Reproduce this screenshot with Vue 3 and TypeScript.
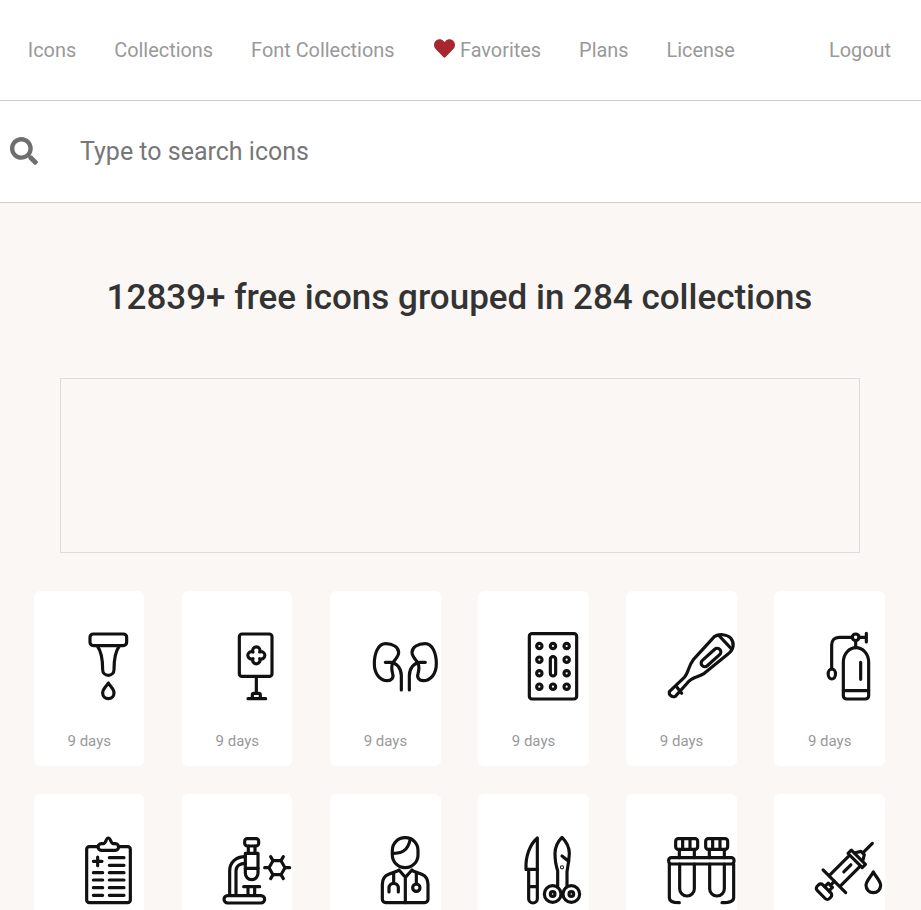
<script setup lang="ts">
interface Link {
  label: string
  heart?: boolean
}

const links: Link[] = [
  { label: 'Icons' },
  { label: 'Collections' },
  { label: 'Font Collections' },
  { label: 'Favorites', heart: true },
  { label: 'Plans' },
  { label: 'License' },
]

// all icons are drawn on a 204 unit square
const icons: string[] = [
  // dropper
  `<rect x="42" y="3" width="110" height="35" rx="10"/>
   <path d="M64 39C76 55 80 85 80 110A17 17 0 0 0 114 110C114 85 118 55 130 39"/>
   <path d="M97 150C90 162 80 168 80 180A17 17 0 0 0 114 180C114 168 104 162 97 150Z"/>`,
  // iv bag
  `<rect x="46" y="3" width="98" height="127" rx="8"/>
   <path d="M87 57A11 11 0 1 1 107 57A11 11 0 1 1 107 77A11 11 0 1 1 87 77A11 11 0 1 1 87 57Z"/>
   <path d="M97 131V181M72 197H125M85 197V186a5 5 0 0 1 5-5H104a5 5 0 0 1 5 5V197"/>`,
  // kidneys
  `<path d="M41 32C18 32 7 62 7 92C7 122 24 143 46 143C58 143 66 134 62 122C58 108 58 100 62 90C68 80 80 72 80 58C80 42 62 32 41 32Z"/>
   <path d="M40 88H56C76 90 88 108 88 128V171"/>
   <path d="M159 32C182 32 193 62 193 92C193 122 176 143 154 143C142 143 134 134 138 122C142 108 142 100 138 90C132 80 120 72 120 58C120 42 138 32 159 32Z"/>
   <path d="M160 88H144C124 90 112 108 112 128V171"/>`,
  // pills
  `<rect x="28" y="2" width="142" height="196" rx="8"/>
   <circle cx="58" cy="39" r="8"/><circle cx="99" cy="39" r="8"/><circle cx="140" cy="39" r="8"/>
   <circle cx="58" cy="80" r="8"/><circle cx="140" cy="80" r="8"/>
   <circle cx="58" cy="121" r="8"/><circle cx="140" cy="121" r="8"/>
   <circle cx="58" cy="161" r="8"/><circle cx="99" cy="161" r="8"/><circle cx="140" cy="161" r="8"/>
   <rect x="91" y="71" width="16" height="58" rx="8"/>`,
  // thermometer
  `<path d="M4 176L49 133C62 120 60 100 76 80L139 11C152 2 176 3 188 15C200 30 198 50 180 63L109 121C90 134 72 130 58 150L22 190A13 13 0 0 1 4 176Z"/>
   <path d="M154 9L189 46M24 159L41 181"/>
   <rect x="93" y="62.500" width="72" height="22" rx="11" transform="rotate(-42 129 73.500)"/>`,
  // oxygen tank
  `<path d="M82 88C82 62 100 44 120 44C140 44 158 62 158 88V188a10 10 0 0 1-10 10H92a10 10 0 0 1-10-10Z"/>
   <path d="M82 173H158M134 88V139M119 23V44M129 13H151M151 1V27M109 13H69C56 13 47 22 47 36V108"/>
   <circle cx="119" cy="13" r="10"/>
   <ellipse cx="47.500" cy="123" rx="11" ry="15"/>`,
  // clipboard
  `<rect x="32" y="32" width="131" height="168" rx="8"/>
   <path fill="#fff" d="M76 43H118C131 43 131 23 118 23H110C105 23 104 6 97 6C90 6 89 23 84 23H76C63 23 63 43 76 43Z"/>
   <path d="M52 76H78M65 63V89M100 65H144M100 88H144M100 110H144M100 132H144M100 155H144M100 178H144M52 110H80M52 132H80M52 155H80M52 178H80"/>`,
  // microscope
  `<rect x="62" y="8" width="42" height="22" rx="8"/>
   <path d="M73 30V52M93 30V52M64 97H102M64 62C35 62 17 80 17 105V176M64 82C48 82 36 90 36 105V176M59 152H107M72 152V178M92 152V178"/>
   <path d="M64 52H102V112a19 19 0 0 1-38 0Z"/>
   <rect x="0" y="179" width="122" height="22" rx="11"/>
   <path d="M135 95L147 74H171L183 95L171 116H147Z"/>
   <path d="M122 95H135M183 95H197M147 74L140 62M171 74L178 62M147 116L140 128M171 116L178 128"/>`,
  // doctor
  `<rect x="61" y="5" width="77" height="90" rx="38"/>
   <path d="M61 52C85 52 108 48 115 8"/>
   <path d="M78 104L50 115C38 120 31 130 31 145V190a10 10 0 0 0 10 10H158a10 10 0 0 0 10-10V145C168 130 161 120 149 115L121 104"/>
   <path d="M81 102L100 124L120 102M100 124V200M65 112V142M51 168V156a14 14 0 0 1 28 0V168M133 112V144"/>
   <circle cx="133" cy="155" r="11"/>`,
  // scalpel and scissors
  `<path d="M52 6V100H18C16 60 30 25 52 6Z"/>
   <path d="M26 100V188a13 13 0 0 0 26 0V100M26 152H52"/>
   <path d="M113 150V104C108 90 105 72 105 52C105 35 112 18 126 4C140 18 148 35 148 52L146 76L126 60"/>
   <path d="M146 76L141 107V150"/>
   <circle cx="98" cy="174" r="25"/><circle cx="98" cy="174" r="7"/>
   <circle cx="154" cy="174" r="25"/><circle cx="154" cy="174" r="7"/>
   <circle cx="126" cy="94" r="1.500"/>`,
  // test tubes
  `<rect x="23" y="8" width="66" height="32" rx="8"/>
   <rect x="113" y="8" width="66" height="32" rx="8"/>
   <path d="M44 8V40M66 8V40M134 8V40M156 8V40M34 40V65M79 40V65M124 40V65M169 40V65"/>
   <rect x="2" y="65" width="196" height="19" rx="8"/>
   <path d="M35 84V158a22 22 0 0 0 44 0V84M125 84V158a22 22 0 0 0 44 0V84"/>
   <path d="M4 84V185C4 194 12 200 34 200M197 84V185C197 194 189 200 162 200"/>`,
  // syringe
  `<g transform="translate(24 167) rotate(-45)">
     <rect x="-12" y="-26" width="24" height="52" rx="9"/>
     <path d="M12 -9H27V9H12M27 0H44"/>
     <path d="M44 -48V48M44 -23H132V23H44M132 -30L146 -30V30L132 30M146 -18L164 -7V7L146 18M164 0H205M84 0H114"/>
   </g>
   <path d="M172 108C165 122 150 135 150 148A22 22 0 0 0 194 148C194 135 179 122 172 108Z"/>`,
]
</script>

<template>
  <div class="page">
    <nav class="nav">
      <a v-for="link in links" :key="link.label" class="nav__link">
        <svg v-if="link.heart" class="nav__heart" viewBox="0 0 512 512">
          <path
            fill="#a8272f"
            d="M462.300 62.600C407.500 15.900 326 24.300 275.700 76.200L256 96.500l-19.700-20.300C186.100 24.300 104.500 15.900 49.700 62.600c-62.800 53.600-66.100 149.800-9.900 207.900l193.500 199.800c12.500 12.900 32.800 12.900 45.300 0l193.500-199.800c56.300-58.100 53-154.300-9.800-207.900z"
          />
        </svg>
        {{ link.label }}
      </a>
      <a class="nav__link nav__link--end">Logout</a>
    </nav>

    <div class="search">
      <svg class="search__icon" viewBox="0 0 512 512">
        <path
          fill="#6f6f6f"
          d="M505 442.700L405.300 343c-4.500-4.500-10.600-7-17-7H372c27.600-35.300 44-79.700 44-128C416 93.100 322.900 0 208 0S0 93.100 0 208s93.100 208 208 208c48.300 0 92.700-16.400 128-44v16.300c0 6.400 2.500 12.500 7 17l99.700 99.700c9.400 9.400 24.600 9.400 33.900 0l28.300-28.300c9.400-9.400 9.400-24.600.1-34zM208 336c-70.700 0-128-57.200-128-128 0-70.700 57.200-128 128-128 70.700 0 128 57.200 128 128 0 70.700-57.200 128-128 128z"
        />
      </svg>
      <span class="search__text">Type to search icons</span>
    </div>

    <main class="main">
      <h1 class="main__title">12839+ free icons grouped in 284 collections</h1>
      <div class="ad"></div>
      <div class="grid">
        <div v-for="(icon, i) in icons" :key="i" class="card">
          <svg
            class="card__icon"
            viewBox="0 0 204 204"
            fill="none"
            stroke="#111"
            stroke-width="9.500"
            stroke-linecap="round"
            stroke-linejoin="round"
            v-html="icon"
          ></svg>
          <div v-if="i < 6" class="card__age">9 days</div>
        </div>
      </div>
    </main>
  </div>
</template>

<style>
html,
body {
  margin: 0;
  overflow: hidden;
}
</style>

<style scoped>
.page {
  height: 910px;
  overflow: hidden;
  font-family: Roboto, 'Noto Sans', sans-serif;
  background: #fff;
}

.nav {
  display: flex;
  align-items: center;
  gap: 38px;
  height: 100px;
  padding: 0 30px 0 27.800px;
  border-bottom: 1px solid #ccc;
}

.nav__link {
  display: flex;
  align-items: center;
  gap: 5px;
  font-size: 19.900px;
  color: #999;
}

.nav__link--end {
  margin-left: auto;
}

.nav__heart {
  width: 21px;
  height: 21px;
  margin: -3px 0 0 1.500px;
}

.search {
  display: flex;
  align-items: center;
  height: 101px;
  padding-left: 10px;
  border-bottom: 1px solid #ccc;
}

.search__icon {
  width: 28px;
  height: 28px;
  margin-top: -2px;
}

.search__text {
  margin-left: 42px;
  font-size: 25px;
  color: #777;
}

.main {
  padding: 75px 36px 0 34px;
  background: #fbf7f4;
  height: 707px;
}

.main__title {
  margin: 0 0 0 -34px;
  width: 919px;
  font-size: 35px;
  font-weight: 500;
  line-height: 40px;
  text-align: center;
  color: #333;
}

.ad {
  width: 798px;
  height: 173px;
  margin: 60px 0 38px 26px;
  border: 1px solid #ddd;
}

.grid {
  display: grid;
  grid-template-columns: repeat(6, 110.400px);
  column-gap: 37.700px;
  row-gap: 28px;
}

.card {
  height: 175px;
  padding: 42px 0 0 42px;
  box-sizing: border-box;
  background: #fff;
  border-radius: 6px;
}

.card__icon {
  display: block;
  width: 68px;
  height: 68px;
  overflow: visible;
}

.card__age {
  margin: 31px 0 0 -8.500px;
  width: 60px;
  font-size: 15px;
  line-height: 18px;
  color: #999;
  white-space: nowrap;
}
</style>
